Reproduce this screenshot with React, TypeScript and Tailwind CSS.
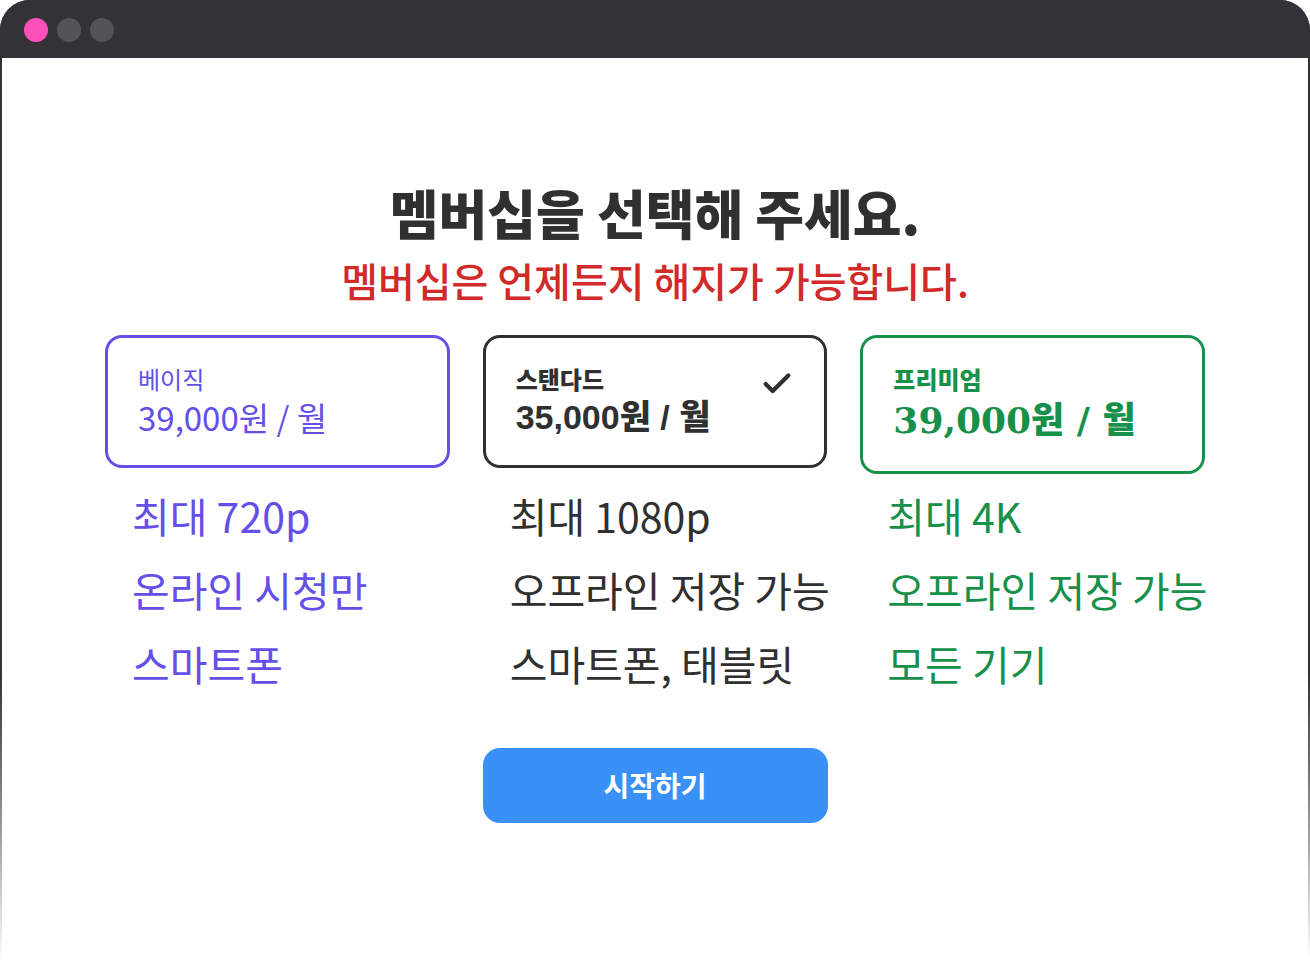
import { useState } from 'react';
import { Check } from 'lucide-react';
import clsx from 'clsx';

interface Plan {
  id: string;
  name: string;
  price: string;
  features: string[];
  color: string;
  nameStyle: string;
  priceStyle: string;
}

const plans: Plan[] = [
  {
    id: 'basic',
    name: '베이직',
    price: '39,000원 / 월',
    features: ['최대 720p', '온라인 시청만', '스마트폰'],
    color: 'text-[#644fe8]',
    nameStyle: 'font-normal',
    priceStyle: 'text-[33px] leading-[46px] font-normal',
  },
  {
    id: 'standard',
    name: '스탠다드',
    price: '35,000원 / 월',
    features: ['최대 1080p', '오프라인 저장 가능', '스마트폰, 태블릿'],
    color: 'text-[#303030]',
    nameStyle: 'font-black',
    priceStyle: "text-[34px] leading-[46px] font-black font-['Liberation_Sans','Noto_Sans_CJK_KR',sans-serif]",
  },
  {
    id: 'premium',
    name: '프리미엄',
    price: '39,000원 / 월',
    features: ['최대 4K', '오프라인 저장 가능', '모든 기기'],
    color: 'text-[#17904a]',
    nameStyle: 'font-black',
    priceStyle: "text-[36px] leading-[52px] font-black font-['DejaVu_Serif','Noto_Sans_CJK_KR',serif]",
  },
];

function TitleBar() {
  return (
    <div className="flex h-[58px] items-center gap-[9px] bg-[#333238] px-6 pt-0.5">
      <span className="size-6 rounded-full bg-[#ff4fb9]" />
      <span className="size-6 rounded-full bg-[#545456]" />
      <span className="size-6 rounded-full bg-[#545456]" />
    </div>
  );
}

function PlanOption({ plan, selected, onSelect }: { plan: Plan; selected: boolean; onSelect: () => void }) {
  return (
    <div className={clsx('row-span-2 grid min-w-0 grid-cols-1 grid-rows-subgrid', plan.color)}>
      <label className="relative flex cursor-pointer items-start justify-between self-start rounded-[17px] border-3 border-current px-[30px] py-[25px]">
        <input
          type="radio"
          name="plan"
          value={plan.id}
          checked={selected}
          onChange={onSelect}
          className="sr-only"
        />
        <span className="flex flex-col whitespace-nowrap">
          <span className={clsx('text-[24px] leading-[31px]', plan.nameStyle)}>{plan.name}</span>
          <span className={plan.priceStyle}>{plan.price}</span>
        </span>
        {selected && <Check size={34} strokeWidth={3} className="mt-1 shrink-0" />}
      </label>
      <ul className="pl-[27px] text-[41px] leading-[74px] whitespace-nowrap">
        {plan.features.map((feature) => (
          <li key={feature}>{feature}</li>
        ))}
      </ul>
    </div>
  );
}

export default function App() {
  const [selected, setSelected] = useState('standard');

  return (
    <div className="flex min-h-screen flex-col overflow-hidden rounded-t-[30px] bg-linear-to-b from-[#333238] from-70% to-white to-100% font-['Noto_Sans_CJK_KR',sans-serif]">
      <TitleBar />
      <main className="mx-0.5 flex grow flex-col bg-white pt-[116px] pb-32">
        <h1 className="text-center text-[53px] leading-[76px] font-black text-[#303030]">멤버십을 선택해 주세요.</h1>
        <p className="text-center text-[40px] leading-[60px] font-medium text-[#d02a2a]">멤버십은 언제든지 해지가 가능합니다.</p>

        <form
          className="mx-auto mt-[25px] flex w-full max-w-[1100px] flex-col"
          onSubmit={(e) => e.preventDefault()}
        >
          <div className="grid grid-cols-3 grid-rows-[auto_auto] gap-x-[33px] gap-y-1">
            {plans.map((plan) => (
              <PlanOption
                key={plan.id}
                plan={plan}
                selected={selected === plan.id}
                onSelect={() => setSelected(plan.id)}
              />
            ))}
          </div>
          <button
            type="submit"
            className="mx-auto mt-12 w-[345px] rounded-[17px] bg-[#3990f7] py-4 text-[28px] leading-[43px] font-bold text-white"
          >
            시작하기
          </button>
        </form>
      </main>
    </div>
  );
}
